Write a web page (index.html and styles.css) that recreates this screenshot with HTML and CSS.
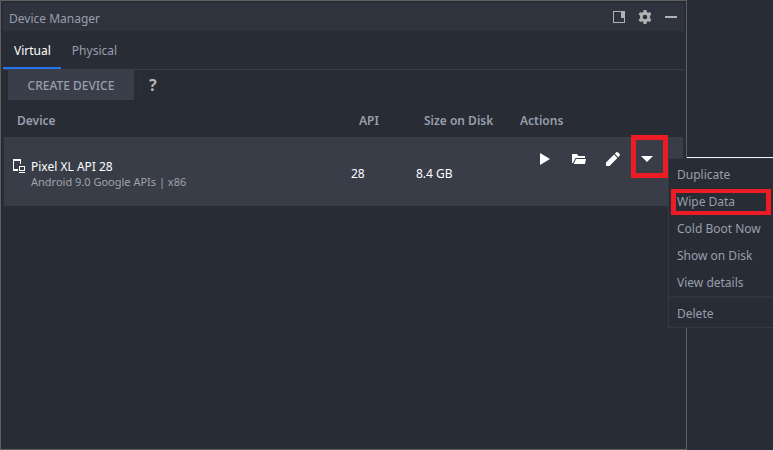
FILE: index.html
```html
<!DOCTYPE html>
<html lang="en">
<head>
    <meta charset="UTF-8">
    <meta name="viewport" content="width=device-width, initial-scale=1.0">
    <title>Device Manager</title>
    <link rel="stylesheet" href="styles.css">
</head>
<body>
    <main class="panel">
        <header class="title-bar">
            <h1>Device Manager</h1>
            <div class="window-buttons">
                <button type="button" aria-label="View mode">
                    <svg width="12" height="12" viewBox="0 0 12 12" shape-rendering="crispEdges"><path fill="none" stroke="#afb1b3" d="M.5.5h11v11H.5z"/><path fill="#afb1b3" d="M8 1h4v6H8z"/></svg>
                </button>
                <button type="button" aria-label="Settings">
                    <svg width="14" height="14" viewBox="0 0 14 14"><path fill="#afb1b3" fill-rule="evenodd" d="M5.6 0h2.8l.4 2 1.3.7 1.9-.7 1.4 2.5-1.5 1.3v2.4l1.5 1.3-1.4 2.5-1.9-.7-1.3.7-.4 2H5.6l-.4-2-1.3-.7-1.9.7L.6 9.5l1.5-1.3V5.8L.6 4.5 2 2l1.9.7L5.2 2zM7 4.7a2.3 2.3 0 1 0 0 4.6 2.3 2.3 0 0 0 0-4.6z"/></svg>
                </button>
                <button type="button" aria-label="Hide">
                    <svg width="12" height="12" viewBox="0 0 12 12"><path fill="#afb1b3" d="M0 5h12v2H0z"/></svg>
                </button>
            </div>
        </header>

        <nav class="tabs">
            <a class="tab active" href="#virtual">Virtual</a>
            <a class="tab" href="#physical">Physical</a>
        </nav>

        <div class="toolbar">
            <button type="button" class="create">CREATE DEVICE</button>
            <button type="button" class="help" aria-label="Help">?</button>
        </div>

        <table class="devices">
            <thead>
                <tr>
                    <th class="col-device">Device</th>
                    <th class="col-api">API</th>
                    <th class="col-size">Size on Disk</th>
                    <th class="col-actions">Actions</th>
                </tr>
            </thead>
            <tbody>
                <tr>
                    <td class="col-device">
                        <div class="device">
                            <svg width="13" height="14" viewBox="0 0 13 14" shape-rendering="crispEdges"><path fill="#fff" d="M0 0h8v5H7V2H1v8h4v2H0zM6 7h6v5H6zm1 1v3h4V8zM6 13h6v1H6z" fill-rule="evenodd"/></svg>
                            <div>
                                <div class="device-name">Pixel XL API 28</div>
                                <div class="device-info">Android 9.0 Google APIs | x86</div>
                            </div>
                        </div>
                    </td>
                    <td class="col-api">28</td>
                    <td class="col-size">8.4 GB</td>
                    <td class="col-actions">
                        <div class="actions">
                            <button type="button" aria-label="Launch">
                                <svg width="14" height="14" viewBox="0 0 14 14"><path fill="#fff" d="M2 1l10 6-10 6z"/></svg>
                            </button>
                            <button type="button" aria-label="Show folder">
                                <svg width="14" height="14" viewBox="0 0 14 14"><path fill="#fff" d="M0 2h5l1.5 2H13v2H3.5L1 11H0zM4 7h10l-1 5H1.8z"/></svg>
                            </button>
                            <button type="button" aria-label="Edit">
                                <svg width="14" height="14" viewBox="0 0 14 14"><path fill="#fff" d="M0 14v-3.500L8 2.600 11.400 6 3.500 14zM8.800 1.800L10 .6q1.100-1 2.200 0l1.200 1.200q1 1.100 0 2.200L12.200 5.200z"/></svg>
                            </button>
                            <button type="button" class="marked" aria-label="More actions">
                                <svg width="14" height="14" viewBox="0 0 14 14"><path fill="#fff" d="M1 4h12l-6 6z"/></svg>
                            </button>
                        </div>
                    </td>
                </tr>
            </tbody>
        </table>
    </main>

    <aside class="side"></aside>

    <div class="menu">
        <button type="button">Duplicate</button>
        <button type="button" class="marked">Wipe Data</button>
        <button type="button">Cold Boot Now</button>
        <button type="button">Show on Disk</button>
        <button type="button">View details</button>
        <hr>
        <button type="button">Delete</button>
    </div>
</body>
</html>
```

FILE: styles.css
```css
* {
    box-sizing: border-box;
}
body {
    margin: 0;
    min-height: 100vh;
    display: flex;
    position: relative;
    background-color: #282c34;
    color: #979fad;
    font-family: "Noto Sans", "Noto Sans CJK KR", sans-serif;
    font-size: 12px;
    line-height: 16px;
}
button {
    margin: 0;
    padding: 0;
    border: 0;
    background: none;
    color: inherit;
    font: inherit;
}
svg {
    display: block;
}
.panel {
    flex: 1;
    border: 1px solid #5e5e5e;
    padding: 2px;
}
.side {
    width: 86px;
    height: 158px;
    border-bottom: 1px solid #f0f1fa;
}

/* title bar */
.title-bar {
    display: flex;
    align-items: center;
    justify-content: space-between;
    height: 28px;
    padding: 0 7px 0 6px;
    background-color: #2f333d;
}
.title-bar h1 {
    margin: 0;
    padding-top: 3px;
    font-size: 12px;
    font-weight: normal;
}
.window-buttons {
    display: flex;
    align-items: center;
    gap: 13px;
}

/* tabs */
.tabs {
    display: flex;
    height: 39px;
    border-bottom: 1px solid #3a3f4a;
}
.tab {
    padding: 12px 10px 0 11px;
    color: #979fad;
    text-decoration: none;
}
.tab.active {
    color: #fff;
    border-bottom: 2px solid #2675f0;
}

/* toolbar */
.toolbar {
    display: flex;
    align-items: center;
    padding: 0 5px;
}
.create {
    width: 126px;
    height: 30px;
    padding-top: 2px;
    background-color: #3a3e4a;
    font-weight: 500;
}
.help {
    height: 20px;
    margin-left: 5px;
    padding: 0 9px;
    border-left: 1px solid #30343e;
    color: #b4b6b9;
    font-size: 16px;
    font-weight: bold;
    line-height: 20px;
}

/* device list */
.devices {
    width: 100%;
    padding: 0 1px;
    border-spacing: 0;
    table-layout: fixed;
}
.devices th {
    height: 37px;
    padding: 4px 0 0 16px;
    font-weight: 600;
    text-align: left;
}
.devices td {
    height: 69px;
    padding: 4px 0 0 8px;
    background-color: #383d48;
    color: #fff;
}
.devices th.col-device {
    padding-left: 13px;
}
.devices td.col-device {
    padding-left: 9px;
}
.col-api {
    width: 65px;
}
.col-size {
    width: 96px;
}
.col-actions {
    width: 179px;
}
.device {
    display: flex;
    gap: 5px;
    line-height: 15px;
}
.device-info {
    color: #a0a3a8;
    font-size: 11px;
}
.devices td.col-actions {
    padding: 10px 0 0 24px;
    vertical-align: top;
}
.actions {
    display: flex;
}
.actions button {
    display: flex;
    align-items: center;
    justify-content: center;
    width: 34px;
    height: 24px;
}

/* popup menu */
.menu {
    position: absolute;
    top: 158px;
    right: 0;
    width: 105px;
    padding: 2px 0 0;
    border: 1px solid #333842;
    border-right: 0;
    background-color: #282c34;
}
.menu button {
    display: block;
    width: 100%;
    height: 27px;
    padding-left: 8px;
    text-align: left;
}
.menu hr {
    height: 2px;
    margin: 0 0 2px 1px;
    border: 0;
    background-color: #30343f;
}

/* red marks around the controls to click */
.marked {
    position: relative;
}
.marked::after {
    content: "";
    position: absolute;
    border: 5px solid #ed1c24;
}
.actions .marked::after {
    inset: -12px -4px -7px 1px;
}
.menu .marked::after {
    inset: 1px 2px 0;
    border-width: 4px 5px;
}
```
